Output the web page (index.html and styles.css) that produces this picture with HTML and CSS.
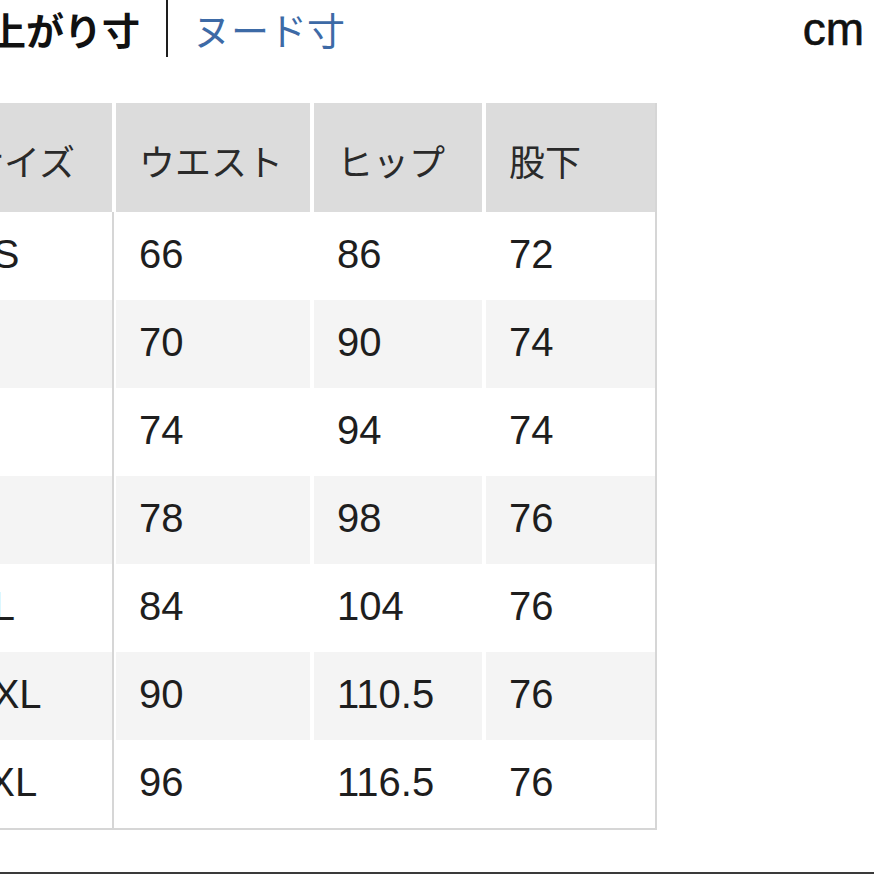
FILE: index.html
```html
<!DOCTYPE html>
<html lang="ja">
<head>
<meta charset="utf-8">
<title>サイズ表</title>
<link rel="stylesheet" href="styles.css">
</head>
<body>
<div class="page">
  <div class="topbar">
    <div class="tab tab-active">上がり寸</div>
    <div class="divider"></div>
    <div class="tab tab-link">ヌード寸</div>
    <div class="unit">cm</div>
  </div>

  <div class="size-table">
    <div class="row row-head">
      <div class="cell cell-first">サイズ</div>
      <div class="cell">ウエスト</div>
      <div class="cell">ヒップ</div>
      <div class="cell">股下</div>
    </div>
    <div class="row row-body">
      <div class="cell cell-first">XS</div>
      <div class="cell">66</div>
      <div class="cell">86</div>
      <div class="cell">72</div>
    </div>
    <div class="row row-body row-alt">
      <div class="cell cell-first">S</div>
      <div class="cell">70</div>
      <div class="cell">90</div>
      <div class="cell">74</div>
    </div>
    <div class="row row-body">
      <div class="cell cell-first">M</div>
      <div class="cell">74</div>
      <div class="cell">94</div>
      <div class="cell">74</div>
    </div>
    <div class="row row-body row-alt">
      <div class="cell cell-first">L</div>
      <div class="cell">78</div>
      <div class="cell">98</div>
      <div class="cell">76</div>
    </div>
    <div class="row row-body">
      <div class="cell cell-first">XL</div>
      <div class="cell">84</div>
      <div class="cell">104</div>
      <div class="cell">76</div>
    </div>
    <div class="row row-body row-alt">
      <div class="cell cell-first">XXL</div>
      <div class="cell">90</div>
      <div class="cell">110.5</div>
      <div class="cell">76</div>
    </div>
    <div class="row row-body">
      <div class="cell cell-first">3XL</div>
      <div class="cell">96</div>
      <div class="cell">116.5</div>
      <div class="cell">76</div>
    </div>
  </div>

  <div class="bottom-rule"></div>
</div>
</body>
</html>
```

FILE: styles.css
```css
html, body {
  margin: 0;
  padding: 0;
  background: #ffffff;
}

body {
  width: 874px;
  height: 874px;
  overflow: hidden;
  font-family: "Liberation Sans", "Noto Sans CJK JP", sans-serif;
  color: #222222;
}

.page {
  display: flex;
  flex-direction: column;
}

/* ---------- top bar ---------- */
.topbar {
  display: flex;
  align-items: center;
  height: 58px;
}

.tab {
  font-family: "Noto Sans CJK JP", sans-serif;
  font-size: 38px;
  line-height: 1;
  white-space: nowrap;
}

.tab-active {
  margin-left: -12px;
  padding-right: 26px;
  font-weight: 700;
  color: #111111;
}

.divider {
  width: 2px;
  align-self: stretch;
  margin-bottom: 1px;
  background: #1e1e1e;
}

.tab-link {
  margin-left: 25px;
  color: #3d6aa6;
}

.unit {
  margin-left: auto;
  margin-right: 10px;
  font-size: 46px;
  line-height: 1;
  color: #111111;
  -webkit-text-stroke: 0.6px #111111;
}

/* ---------- table ---------- */
.size-table {
  margin-top: 45px;
  margin-left: -57px;
  width: 712px;
  display: flex;
  flex-direction: column;
  border-right: 2px solid #d6d6d6;
  border-bottom: 2px solid #d6d6d6;
}

.row {
  display: grid;
  grid-template-columns: 169px 194px 168px 169px;
  column-gap: 4px;
}

.cell {
  padding-left: 23px;
  white-space: nowrap;
}

.row-head .cell {
  height: 109px;
  line-height: 109px;
  padding-top: 3px;
  box-sizing: border-box;
  background: #dcdcdc;
  font-family: "Noto Sans CJK JP", sans-serif;
  font-size: 36px;
  color: #2a2a2a;
}

.row-head .cell-first {
  padding-left: 25px;
}

.row-body .cell {
  height: 88px;
  line-height: 84px;
  padding-bottom: 4px;
  box-sizing: border-box;
  background: #ffffff;
  font-size: 40px;
  color: #1e1e1e;
}

.row-body.row-alt .cell {
  background: #f4f4f4;
}

.row-body .cell-first {
  box-shadow: 2px 0 0 #d6d6d6;
}

/* ---------- bottom rule ---------- */
.bottom-rule {
  margin-top: 42px;
  height: 2px;
  background: #3a3a3a;
}
```
